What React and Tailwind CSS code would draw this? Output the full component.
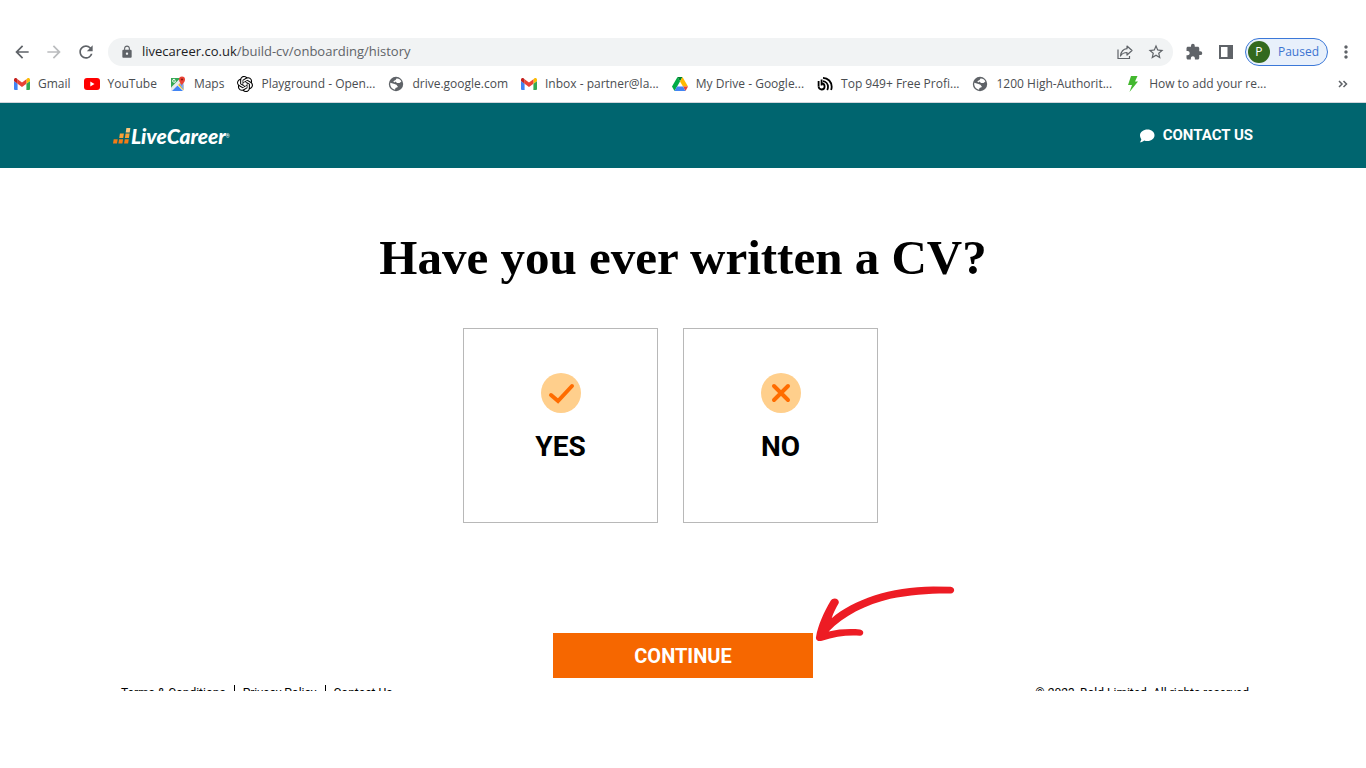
import { SiOpenai } from "react-icons/si";
import { MdArrowBack, MdArrowForward, MdRefresh, MdLock, MdStarBorder, MdMoreVert, MdExtension } from "react-icons/md";

const GmailIcon = () => (
  <svg viewBox="0 0 16 12" className="w-4 h-3 shrink-0">
    <path d="M1 12h2.6V5.8L0 3v8a1 1 0 0 0 1 1z" fill="#4285f4" />
    <path d="M12.4 12H15a1 1 0 0 0 1-1V3l-3.6 2.8z" fill="#34a853" />
    <path d="M12.4 1.2v4.6L16 3V1.7C16 .2 14.3-.5 13.2.5z" fill="#fbbc04" />
    <path d="M3.6 5.8V1.2L8 4.6l4.4-3.4v4.6L8 9.1z" fill="#ea4335" />
    <path d="M0 1.7V3l3.6 2.8V1.2L2.8.5C1.7-.5 0 .2 0 1.7z" fill="#c5221f" />
  </svg>
);

const YouTubeIcon = () => (
  <svg viewBox="0 0 16 12" className="w-4 h-3 shrink-0">
    <rect width="16" height="12" rx="3" fill="#f00" />
    <path d="M6.3 3.5v5l4.2-2.5z" fill="#fff" />
  </svg>
);

const MapsIcon = () => (
  <svg viewBox="0 0 16 16" className="size-4 shrink-0">
    <path d="M1 2h10L1 13z" fill="#34a853" />
    <path d="M1 11.5 9.5 3l2 2L2.5 15H1z" fill="#e8eaed" />
    <path d="M2 15l5.5-5.5L13 15z" fill="#4285f4" />
    <path d="M8 9l3-3 2.5 3v5.5z" fill="#fbbc04" />
    <path d="M9 8l4.5 6V7z" fill="#7baaf7" />
    <path d="M11.8 10C11.5 7.5 9 6.5 9 3.5a3 3 0 0 1 6 0c0 3-2.7 4-3.2 6.5z" fill="#ea4335" />
    <circle cx="12" cy="3.5" r="1.1" fill="#8c1a11" />
    <path d="M5.8 4.6H4.3v.8h.7a1 1 0 1 1-.2-1.3l.6-.6a1.8 1.8 0 1 0 .5 1.5z" fill="#fff" />
  </svg>
);

const DriveIcon = () => (
  <svg viewBox="0 0 16 14" className="w-4 h-3.5 shrink-0">
    <path d="M5.5 0 0 9.5l2.5 4.5L8 4.5z" fill="#00ac47" />
    <path d="M5.5 0h5L8 4.5z" fill="#00832d" />
    <path d="M10.5 0 16 9.5h-5L8 4.5z" fill="#ffba00" />
    <path d="M11 9.5h5L13.5 14z" fill="#ea4335" />
    <path d="M2.5 14 5 9.5h6l2.5 4.5z" fill="#4285f4" />
  </svg>
);

const BlogIcon = () => (
  <svg viewBox="0 0 16 16" className="size-4 shrink-0" fill="none" stroke="#000" strokeWidth="1.8">
    <path d="M1.6 5v5.5M4.6 3.500v6" />
    <path d="M1.600 10.500a3 3 0 1 0 3-3" />
    <path d="M6 5.200c3 .3 5 2.800 5 5.800 0 1.200-.3 2.200-.8 3" />
    <path d="M6 1.800c5 .2 8.700 4 8.700 9 0 1.200-.2 2.200-.6 3.200" />
  </svg>
);

const BoltIcon = () => (
  <svg viewBox="0 0 16 16" className="size-4 shrink-0">
    <path d="M6 0h6.500L10 5.500h3L4.500 16 7 9H3z" fill="#43b82f" />
  </svg>
);

const GlobeIcon = () => (
  <svg viewBox="0 0 16 16" className="size-4 shrink-0">
    <circle cx="8" cy="8" r="7.2" fill="#5f6368" />
    <path d="M8.5 2.5C10.5 2.2 12.5 3.5 13.4 5.5L11.5 7H9L7.5 5.5 6.3 6.5l-1-1.2L7.6 4z" fill="#fff" />
    <path d="M2.3 6.8 6.5 8l2 .8 1.5 2.2-2.5 1-.5 1.7C4.5 13.3 2.4 11 2.2 8.5z" fill="#fff" />
  </svg>
);

const bookmarks = [
  { label: "Gmail", icon: <GmailIcon /> },
  { label: "YouTube", icon: <YouTubeIcon /> },
  { label: "Maps", icon: <MapsIcon /> },
  { label: "Playground - Open...", icon: <SiOpenai className="size-4 shrink-0 text-black" /> },
  { label: "drive.google.com", icon: <GlobeIcon /> },
  { label: "Inbox - partner@la...", icon: <GmailIcon /> },
  { label: "My Drive - Google...", icon: <DriveIcon /> },
  { label: "Top 949+ Free Profi...", icon: <BlogIcon /> },
  { label: "1200 High-Authorit...", icon: <GlobeIcon /> },
  { label: "How to add your re...", icon: <BoltIcon /> },
];

const BrowserBar = () => (
  <div className="font-['Open_Sans','Noto_Sans',sans-serif] border-b border-gray-300">
    <div className="flex items-center h-7 pl-3 pr-2.5 text-[#5f6368]">
      <button aria-label="Back"><MdArrowBack className="size-5" /></button>
      <button aria-label="Forward" className="ml-3 text-[#babcbe]"><MdArrowForward className="size-5" /></button>
      <button aria-label="Reload" className="ml-3"><MdRefresh className="size-5" /></button>
      <div className="flex flex-1 items-center h-7 ml-3 pl-3 pr-2 rounded-full bg-[#f1f3f4]">
        <MdLock className="size-3.5" />
        <p className="flex-1 ml-2 text-[13px]">
          <span className="text-[#202124]">livecareer.co.uk</span>/build-cv/onboarding/history
        </p>
        <button aria-label="Share">
          <svg viewBox="0 0 16 16" className="size-4" fill="none" stroke="currentColor" strokeWidth="1.2">
            <path d="M1 5.5V14.5H12.5V12" />
            <path d="M10 2l5 4.5L10 11V8.5C7 8.5 5 9.5 3.5 12 4 8 6.5 5 10 4.7z" strokeLinejoin="round" />
          </svg>
        </button>
        <button aria-label="Bookmark" className="ml-3.5"><MdStarBorder className="size-[18px]" /></button>
      </div>
      <button aria-label="Extensions" className="ml-3"><MdExtension className="size-[18px]" /></button>
      <button aria-label="Side panel" className="ml-4">
        <svg viewBox="0 0 14 14" className="size-3.5">
          <path d="M0 0h14v14H0zM2 2v10h6.5V2z" fill="currentColor" fillRule="evenodd" />
        </svg>
      </button>
      <button className="flex items-center h-7 ml-3 pl-0.5 pr-2 gap-2 rounded-full border border-[#3b78d8] bg-[#e8f0fb] text-xs text-[#3b73d1]">
        <span className="grid place-items-center size-[22px] rounded-full bg-[#33691e] text-white">P</span>
        Paused
      </button>
      <button aria-label="Menu" className="ml-2"><MdMoreVert className="size-5" /></button>
    </div>
    <nav className="flex items-center h-9 pl-3.5 pr-[18px] gap-[13px] text-xs text-[#4a4d51]">
      {bookmarks.map((item) => (
        <a key={item.label} href="#" className="flex items-center gap-2 whitespace-nowrap">
          {item.icon}
          {item.label}
        </a>
      ))}
      <button aria-label="More bookmarks" className="ml-auto">
        <svg viewBox="0 0 10 8" className="w-2.5 h-2" fill="none" stroke="#5f6368" strokeWidth="1.5">
          <path d="M1 1l3 3-3 3M5.5 1l3 3-3 3" />
        </svg>
      </button>
    </nav>
  </div>
);

const Logo = () => (
  <a href="#" aria-label="LiveCareer" className="flex items-center text-white">
    <svg viewBox="0 0 18 16" className="w-[18px] h-4">
      <path d="M13.4 0h4l-.7 4.5h-4z" fill="#fbc77d" />
      <path d="M6.9 5.5h4l-.7 4.5h-4zM12.6 5.500h4l-.7 4.500h-4z" fill="#f9a137" />
      <path d="M.7 11.2h4L4 15.5H0zM6.1 11.2h4l-.7 4.3h-4zM11.8 11.2h4l-.7 4.3h-4z" fill="#f47b16" />
    </svg>
    <span className="font-['Lato',sans-serif] text-[21px] leading-6 font-black italic">LiveCareer</span>
    <span className="text-[5px] leading-3">®</span>
  </a>
);

const ChatIcon = () => (
  <svg viewBox="0 0 16 14" className="w-4 h-3.5">
    <path d="M8.500.5C12.500.5 15.500 3 15.500 6.200S12.500 12 8.500 12c-1.200 0-2.300-.2-3.300-.6C4 12.500 2.500 13.200.8 13.300c.8-.9 1.400-2 1.500-3.100C1.500 9 1 7.700 1 6.200 1 3 4.500.5 8.500.5z" fill="currentColor" />
  </svg>
);

const YesIcon = () => (
  <svg viewBox="0 0 40 40" className="size-10">
    <circle cx="20" cy="20" r="20" fill="#ffcf8c" />
    <path d="M10 22l7 6L31 13" fill="none" stroke="#ff6c00" strokeWidth="4" strokeLinecap="round" />
  </svg>
);

const NoIcon = () => (
  <svg viewBox="0 0 40 40" className="size-10">
    <circle cx="20" cy="20" r="20" fill="#ffcf8c" />
    <path d="M13 13l14 14M27 13L13 27" fill="none" stroke="#ff6c00" strokeWidth="4" strokeLinecap="round" />
  </svg>
);

const OptionCard = ({ icon, label }) => (
  <button className="flex flex-col items-center size-[195px] pt-11 gap-4 border border-[#b8b8b8] bg-white">
    {icon}
    <span className="text-[28px] leading-9 font-bold">{label}</span>
  </button>
);

const Arrow = () => (
  <svg viewBox="825 45 420 170" className="absolute left-full -top-12 w-[140px] h-[57px] ml-0.5">
    <path
      d="M828 201C834 166 852 125 872 92C880 78 900 86 896 99C888 113 880 128 875 144C940 89 1050 50 1180 49L1232 50C1246 52 1246 68 1232 70C1180 69 1110 73 1051 86C979 103 911 137 866 184C895 177 930 175 960 178C973 180 973 195 960 197C923 194 885 199 846 212C835 215 826 210 828 201Z"
      fill="#ed1c24"
    />
  </svg>
);

export default function App() {
  return (
    <div className="pt-[38px] pb-20 bg-white font-['Roboto',sans-serif] text-black">
      <BrowserBar />
      <header className="bg-[#00656f]">
        <div className="flex items-center justify-between max-w-[1140px] h-[65px] mx-auto">
          <Logo />
          <a href="#" className="flex items-center gap-2 text-[15px] font-bold text-white">
            <ChatIcon />
            CONTACT US
          </a>
        </div>
      </header>

      <main className="flex flex-col items-center pt-[60px]">
        <h1 className="font-['Liberation_Serif',serif] text-[49px] leading-[60px] font-bold">
          Have you ever written a CV?
        </h1>
        <div className="flex gap-[25px] mt-10 pr-[25px]">
          <OptionCard icon={<YesIcon />} label="YES" />
          <OptionCard icon={<NoIcon />} label="NO" />
        </div>
        <div className="relative mt-[110px]">
          <button className="w-[260px] h-[45px] bg-[#f66700] text-xl font-bold text-white">CONTINUE</button>
          <Arrow />
        </div>
      </main>

      {/* only the top edge of the footer shows above the fold */}
      <footer className="h-[13px] overflow-hidden">
        <div className="flex justify-between max-w-[1140px] mx-auto pt-[7px] pl-2 pr-1 text-xs">
          <div className="flex divide-x divide-black">
            <a href="#" className="pr-2">Terms &amp; Conditions</a>
            <a href="#" className="px-2">Privacy Policy</a>
            <a href="#" className="pl-2">Contact Us</a>
          </div>
          <p>© 2023, Bold Limited. All rights reserved</p>
        </div>
      </footer>
    </div>
  );
}
